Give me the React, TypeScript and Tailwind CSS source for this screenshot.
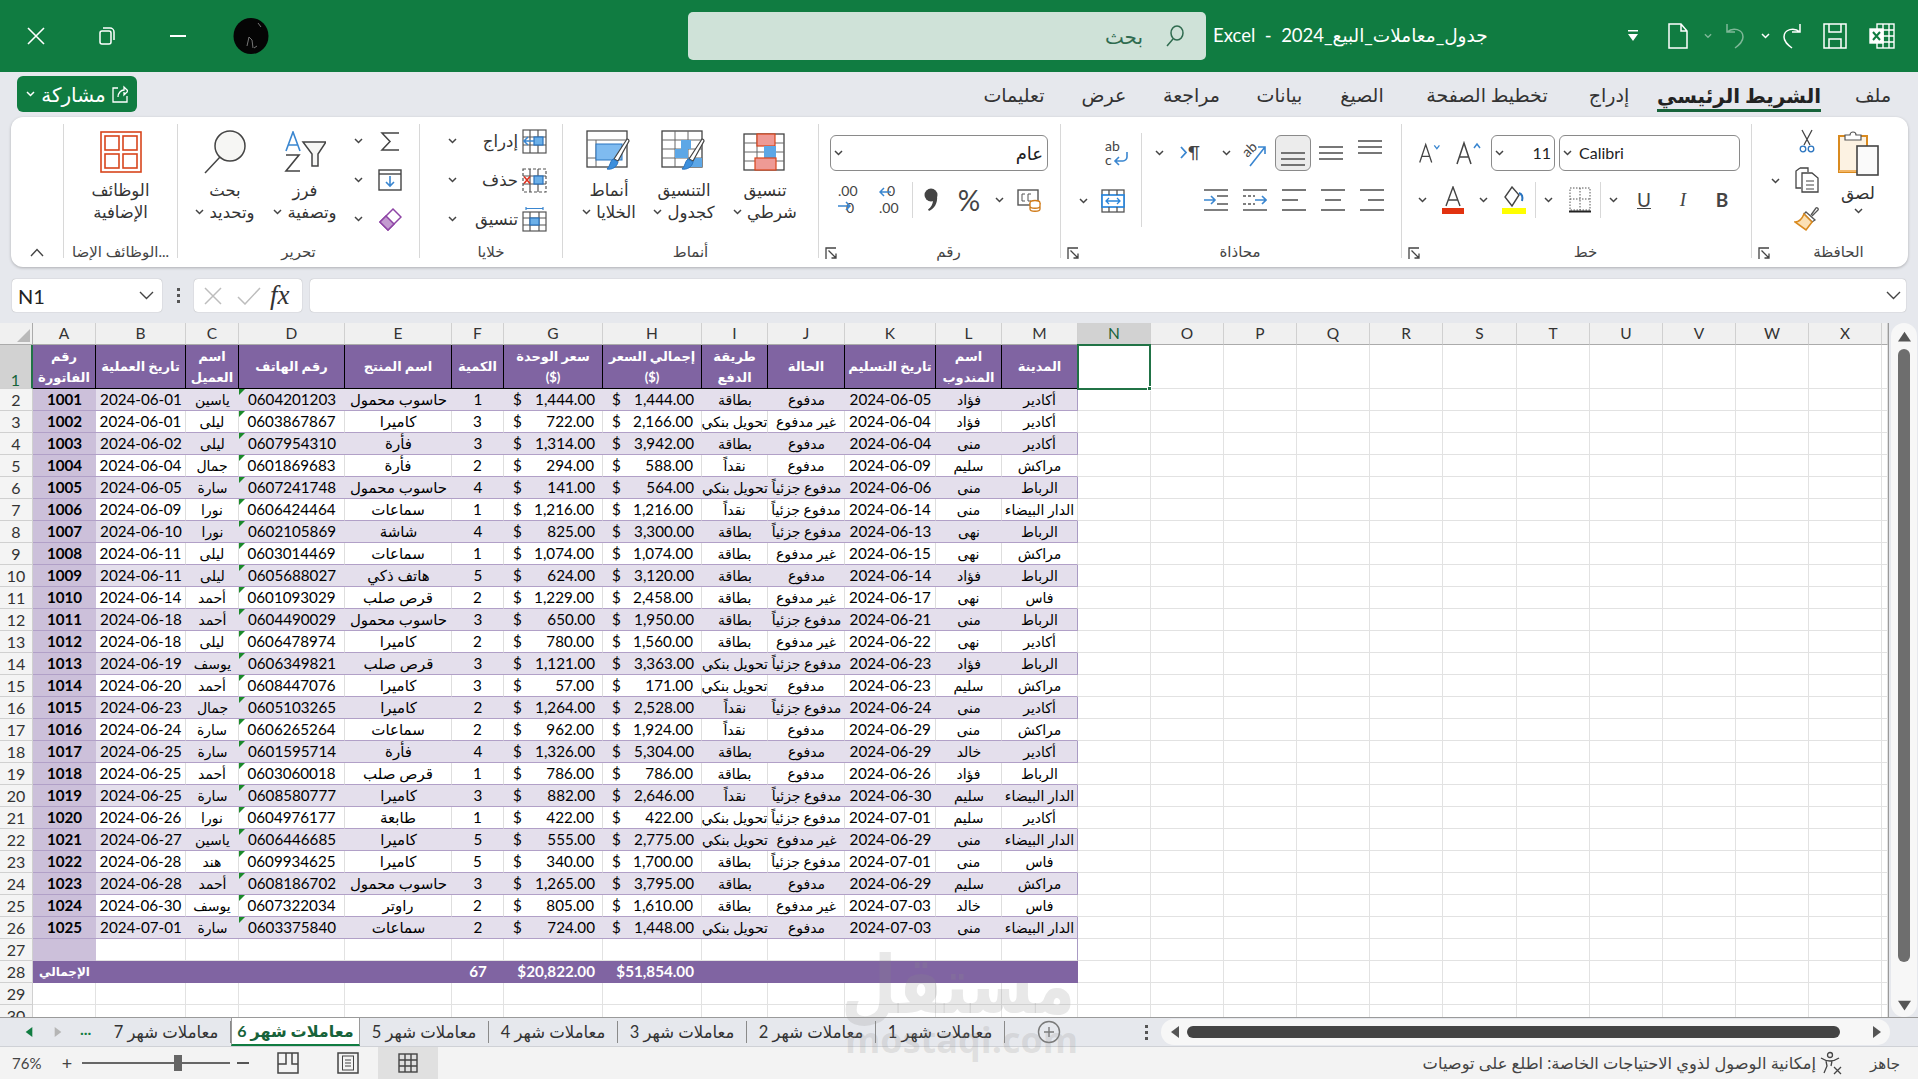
import React from 'react';

const COLS =
  'grid grid-cols-[33px_63px_90px_53px_106px_107px_52px_99px_99px_66px_77px_91px_66px_76px_73px_73px_73px_73px_73px_74px_73px_73px_73px_73px_73px_6px] grid-rows-[22px_44px] auto-rows-[22px]';

const LETTERS = 'A B C D E F G H I J K L M N O P Q R S T U V W X'.split(' ').concat('');

const HEADERS = [
  ['رقم', 'الفاتورة'],
  ['تاريخ العملية'],
  ['اسم', 'العميل'],
  ['رقم الهاتف'],
  ['اسم المنتج'],
  ['الكمية'],
  ['سعر الوحدة', '($)'],
  ['إجمالي السعر', '($)'],
  ['طريقة', 'الدفع'],
  ['الحالة'],
  ['تاريخ التسليم'],
  ['اسم', 'المندوب'],
  ['المدينة'],
];

const ROWS = [
  '1001|2024-06-01|ياسين|0604201203|حاسوب محمول|1|1,444.00|1,444.00|بطاقة|مدفوع|2024-06-05|فؤاد|أكادير',
  '1002|2024-06-01|ليلى|0603867867|كاميرا|3|722.00|2,166.00|تحويل بنكي|غير مدفوع|2024-06-04|فؤاد|أكادير',
  '1003|2024-06-02|ليلى|0607954310|فأرة|3|1,314.00|3,942.00|بطاقة|مدفوع|2024-06-04|منى|أكادير',
  '1004|2024-06-04|جمال|0601869683|فأرة|2|294.00|588.00|نقداً|مدفوع|2024-06-09|سليم|مراكش',
  '1005|2024-06-05|سارة|0607241748|حاسوب محمول|4|141.00|564.00|تحويل بنكي|مدفوع جزئياً|2024-06-06|منى|الرباط',
  '1006|2024-06-09|نورا|0606424464|سماعات|1|1,216.00|1,216.00|نقداً|مدفوع جزئياً|2024-06-14|منى|الدار البيضاء',
  '1007|2024-06-10|نورا|0602105869|شاشة|4|825.00|3,300.00|بطاقة|مدفوع جزئياً|2024-06-13|نهى|الرباط',
  '1008|2024-06-11|ليلى|0603014469|سماعات|1|1,074.00|1,074.00|بطاقة|غير مدفوع|2024-06-15|نهى|مراكش',
  '1009|2024-06-11|ليلى|0605688027|هاتف ذكي|5|624.00|3,120.00|بطاقة|مدفوع|2024-06-14|فؤاد|الرباط',
  '1010|2024-06-14|أحمد|0601093029|قرص صلب|2|1,229.00|2,458.00|بطاقة|غير مدفوع|2024-06-17|نهى|فاس',
  '1011|2024-06-18|أحمد|0604490029|حاسوب محمول|3|650.00|1,950.00|بطاقة|مدفوع جزئياً|2024-06-21|منى|الرباط',
  '1012|2024-06-18|ليلى|0606478974|كاميرا|2|780.00|1,560.00|بطاقة|غير مدفوع|2024-06-22|نهى|أكادير',
  '1013|2024-06-19|يوسف|0606349821|قرص صلب|3|1,121.00|3,363.00|تحويل بنكي|مدفوع جزئياً|2024-06-23|فؤاد|الرباط',
  '1014|2024-06-20|أحمد|0608447076|كاميرا|3|57.00|171.00|تحويل بنكي|مدفوع|2024-06-23|سليم|مراكش',
  '1015|2024-06-23|جمال|0605103265|كاميرا|2|1,264.00|2,528.00|نقداً|مدفوع جزئياً|2024-06-24|منى|أكادير',
  '1016|2024-06-24|سارة|0606265264|سماعات|2|962.00|1,924.00|نقداً|مدفوع|2024-06-29|منى|مراكش',
  '1017|2024-06-25|سارة|0601595714|فأرة|4|1,326.00|5,304.00|بطاقة|مدفوع|2024-06-29|خالد|أكادير',
  '1018|2024-06-25|أحمد|0603060018|قرص صلب|1|786.00|786.00|بطاقة|مدفوع|2024-06-26|فؤاد|الرباط',
  '1019|2024-06-25|سارة|0608580777|كاميرا|3|882.00|2,646.00|نقداً|مدفوع جزئياً|2024-06-30|سليم|الدار البيضاء',
  '1020|2024-06-26|نورا|0604976177|طابعة|1|422.00|422.00|تحويل بنكي|مدفوع جزئياً|2024-07-01|سليم|أكادير',
  '1021|2024-06-27|ياسين|0606446685|كاميرا|5|555.00|2,775.00|تحويل بنكي|غير مدفوع|2024-06-29|منى|الدار البيضاء',
  '1022|2024-06-28|هند|0609934625|كاميرا|5|340.00|1,700.00|بطاقة|مدفوع جزئياً|2024-07-01|منى|فاس',
  '1023|2024-06-28|أحمد|0608186702|حاسوب محمول|3|1,265.00|3,795.00|بطاقة|مدفوع|2024-06-29|سليم|مراكش',
  '1024|2024-06-30|يوسف|0607322034|راوتر|2|805.00|1,610.00|بطاقة|غير مدفوع|2024-07-03|خالد|فاس',
  '1025|2024-07-01|سارة|0603375840|سماعات|2|724.00|1,448.00|تحويل بنكي|مدفوع|2024-07-03|منى|الدار البيضاء',
].map((r) => r.split('|'));

const Chev = ({ c = '#444' }: { c?: string }) => (
  <svg width="9" height="6" viewBox="0 0 9 6" fill="none" stroke={c} strokeWidth="1.5">
    <path d="M1 1l3.5 3.5L8 1" />
  </svg>
);

const BigChev = () => (
  <svg width="15" height="9" viewBox="0 0 15 9" fill="none" stroke="#444" strokeWidth="1.4">
    <path d="M1 1l6.500 6.500L14 1" />
  </svg>
);

const Launcher = () => (
  <svg width="12" height="13" viewBox="0 0 12 13" fill="none" stroke="#444" strokeWidth="1.3">
    <path d="M1 12V1h10" />
    <path d="M3.5 3.5l7 7M11 6.5V11H6.5" />
  </svg>
);

const Tri = ({ dir, c, size = 10 }: { dir: 'l' | 'r' | 'u' | 'd'; c: string; size?: number }) => {
  const d = { l: 'M9 0v12L1 6z', r: 'M1 0v12l8-6z', u: 'M0 10h12L6 1z', d: 'M0 1h12L6 10z' }[dir];
  return (
    <svg width={size} height={size} viewBox={dir === 'l' || dir === 'r' ? '0 0 10 12' : '0 0 12 11'}>
      <path d={d} fill={c} />
    </svg>
  );
};

const AddinsIcon = () => (
  <svg width="42" height="42" viewBox="0 0 42 42" fill="#fff" stroke="#d8451c" strokeWidth="1.6">
    <rect x="1" y="1" width="40" height="40" fill="#fff" />
    <rect x="5" y="5" width="14" height="14" />
    <rect x="23" y="5" width="14" height="14" />
    <rect x="5" y="23" width="14" height="14" />
    <rect x="23" y="23" width="14" height="14" />
  </svg>
);

const FindIcon = () => (
  <svg width="46" height="46" viewBox="0 0 46 46" fill="none" stroke="#444" strokeWidth="1.5">
    <circle cx="28" cy="17" r="15" fill="#f6f6f4" />
    <path d="M18 28L3 44" />
  </svg>
);

const SortIcon = () => (
  <svg width="42" height="42" viewBox="0 0 42 42" fill="none">
    <path d="M2 20L9 1l7 19M4.500 14h9" stroke="#3a86d0" strokeWidth="1.6" />
    <path d="M2 24h13L2 40h14" stroke="#444" strokeWidth="1.6" />
    <path d="M19 11h23l-8 12v12h-6V23z" stroke="#444" strokeWidth="1.5" fill="#f6f6f4" />
  </svg>
);

const SigmaIcon = () => (
  <svg width="20" height="21" viewBox="0 0 20 21" fill="none" stroke="#444" strokeWidth="1.5">
    <path d="M19 2H2l8 8.500L2 19h17" />
  </svg>
);

const FillIcon = () => (
  <svg width="24" height="22" viewBox="0 0 24 22" fill="#fff" stroke="#444" strokeWidth="1.4">
    <rect x="1" y="1" width="22" height="20" />
    <path d="M1 5h22" />
    <path d="M12 7v10M8 13l4 4 4-4" stroke="#3a86d0" fill="none" strokeWidth="1.6" />
  </svg>
);

const EraserIcon = () => (
  <svg width="24" height="24" viewBox="0 0 24 24" stroke="#8e44a5" strokeWidth="1.5">
    <path d="M15 2l8 8-13 13-8-8z" fill="#fff" />
    <path d="M8 9l8 8-6 6-8-8z" fill="#c39bd0" />
  </svg>
);

const CellOp = ({ kind }: { kind: 'ins' | 'del' | 'fmt' }) => (
  <svg width="25" height="25" viewBox="0 0 25 25" fill="none" stroke="#555" strokeWidth="1.2">
    {kind === 'fmt' ? (
      <>
        <path d="M4 1.500h17M4 0v3M21 0v3" stroke="#3a86d0" />
        <rect x="1" y="5" width="23" height="19" />
        <path d="M8 5v19M17 5v19M1 11h23M1 18h23" />
        <rect x="8" y="11" width="9" height="7" fill="#6cb0e8" stroke="#2a74bf" />
      </>
    ) : (
      <>
        <rect x="1" y="1" width="23" height="23" strokeDasharray={kind === 'del' ? '3 2' : undefined} />
        <path d="M8 1v23M16 1v23M1 8h23M1 16h23" />
        <rect x="12" y="8" width="9" height="8" fill="#6cb0e8" stroke="#2a74bf" />
        {kind === 'ins' ? (
          <path d="M12 12H2M6 8l-4 4 4 4" stroke="#3a86d0" strokeWidth="1.6" />
        ) : (
          <path d="M2 8.500l6 7M8 8.500l-6 7" stroke="#e0301e" strokeWidth="1.6" />
        )}
      </>
    )}
  </svg>
);

const Brush = () => (
  <>
    <path d="M41 9c1 0 2 1 2 2L32 31l-4-2z" fill="#fff" stroke="#444" strokeWidth="1.2" />
    <path d="M27 29l5 3c-1 5-6 8-11 7 3-2 3-8 6-10z" fill="#3d8fdc" stroke="#2a74bf" />
  </>
);

const GridBase = () => (
  <>
    <rect x="1" y="1" width="40" height="36" fill="#fff" stroke="#444" strokeWidth="1.3" />
    <path d="M14 1v36M27 1v36M1 10h40M1 19h40M1 28h40" stroke="#666" strokeWidth="1" fill="none" />
  </>
);

const CondIcon = () => (
  <svg width="44" height="38" viewBox="0 0 44 38">
    <GridBase />
    <rect x="14" y="1" width="18" height="12" fill="#ee9a95" stroke="#d8451c" strokeWidth="1.2" />
    <rect x="21" y="13" width="12" height="12" fill="#5da7e6" />
    <rect x="12" y="25" width="21" height="12" fill="#ee9a95" stroke="#d8451c" strokeWidth="1.2" />
  </svg>
);

const TableIcon = () => (
  <svg width="46" height="44" viewBox="0 0 46 44">
    <GridBase />
    <rect x="14" y="19" width="13" height="9" fill="#5da7e6" />
    <rect x="20" y="10" width="10" height="9" fill="#5da7e6" />
    <rect x="27" y="28" width="14" height="9" fill="#5da7e6" />
    <Brush />
  </svg>
);

const StylesIcon = () => (
  <svg width="46" height="44" viewBox="0 0 46 44">
    <rect x="1" y="1" width="40" height="36" fill="#fff" stroke="#444" strokeWidth="1.3" />
    <path d="M1 10h40M10 10v27M1 28h24" stroke="#666" fill="none" />
    <rect x="10" y="14" width="26" height="16" fill="#7fbbf0" stroke="#2a74bf" />
    <Brush />
  </svg>
);

const PasteIcon = () => (
  <svg width="41" height="46" viewBox="0 0 41 46" fill="none">
    <rect x="1" y="6" width="28" height="36" fill="#fcf2e2" stroke="#d98a1f" strokeWidth="2" />
    <path d="M1 40h28v2H1z" fill="#f2b565" />
    <path d="M7 10V5h5a3 3 0 0 1 6 0h5v5z" fill="#fff" stroke="#555" strokeWidth="1.2" />
    <rect x="19" y="16" width="21" height="29" fill="#fafafa" stroke="#444" strokeWidth="1.6" />
  </svg>
);

const CutIcon = () => (
  <svg width="16" height="24" viewBox="0 0 16 24" fill="none" strokeWidth="1.3">
    <path d="M3 1l8 15M13 1L5 16" stroke="#444" />
    <circle cx="4" cy="20" r="2.800" stroke="#2a74bf" />
    <circle cx="12" cy="20" r="2.800" stroke="#2a74bf" />
  </svg>
);

const CopyIcon = () => (
  <svg width="25" height="26" viewBox="0 0 25 26" fill="#fff" stroke="#444" strokeWidth="1.3">
    <path d="M5 1h8v4M5 1L1 4v17h5" />
    <path d="M7 6h10l6 5v14H7z" />
    <path d="M11 14h8M11 18h8M11 22h8" strokeWidth="1" />
  </svg>
);

const PainterIcon = () => (
  <svg width="26" height="26" viewBox="0 0 26 26" fill="none" stroke="#555" strokeWidth="1.3">
    <path d="M17 9l5-7c1-1 3 1 2 2l-6 6" />
    <path d="M12 6l9 8-3 2-8-8z" />
    <path d="M10 8l8 8-6 8-11-8c4 0 7-3 9-8z" fill="#fbe0b4" stroke="#d98a1f" strokeWidth="1.6" />
  </svg>
);

const BigA = ({ up }: { up: boolean }) => (
  <svg width={up ? 28 : 24} height="24" viewBox="0 0 28 24" fill="none" strokeWidth="1.5">
    <path d="M2 23L9 2l7 21M5 16h8" stroke="#444" />
    <path d={up ? 'M19 7l3-4 3 4' : 'M19 3l3 4 3-4'} stroke="#3a86d0" />
  </svg>
);

const FontColor = () => (
  <svg width="22" height="28" viewBox="0 0 22 28" fill="none">
    <path d="M4 20L11 1l7 19M6.500 14h9" stroke="#444" strokeWidth="1.4" />
    <rect x="0" y="22" width="22" height="6" fill="#e2320f" />
  </svg>
);

const FillColor = () => (
  <svg width="24" height="28" viewBox="0 0 24 28" fill="none">
    <path d="M10 1l7 8-7 11-7-9z" stroke="#444" strokeWidth="1.4" />
    <path d="M17 7c3 1 4 4 3 8" stroke="#2a74bf" strokeWidth="2" />
    <rect x="0" y="22" width="24" height="6" fill="#ffff00" />
  </svg>
);

const Borders = () => (
  <svg width="22" height="26" viewBox="0 0 22 26" fill="none" stroke="#555" strokeWidth="1" strokeDasharray="1.500 1.500">
    <rect x="1" y="1" width="20" height="22" />
    <path d="M11 1v22M1 12h20" />
    <path d="M0 24.500h22" stroke="#222" strokeWidth="2" strokeDasharray="none" />
  </svg>
);

const Lines = ({ ys, w = [24, 24, 24], x = [0, 0, 0] }: { ys: number[]; w?: number[]; x?: number[] }) => (
  <svg width="24" height="26" viewBox="0 0 24 26" stroke="#555" strokeWidth="1.6">
    {ys.map((y, i) => (
      <path key={i} d={`M${x[i]} ${y}h${w[i]}`} />
    ))}
  </svg>
);

const IndentIcon = ({ flip }: { flip?: boolean }) => (
  <svg width="24" height="26" viewBox="0 0 24 26" fill="none" stroke="#555" strokeWidth="1.6">
    <path d="M0 3h24M0 23h24" />
    {flip ? <path d="M0 9h12M0 17h12" strokeDasharray="3 2" /> : <path d="M13 9h11M13 17h11" />}
    <path d={flip ? 'M12 13h11M19 9l4 4-4 4' : 'M0 13h10M7 9l4 4-4 4'} stroke="#3a86d0" />
  </svg>
);

const Orient = () => (
  <svg width="26" height="28" viewBox="0 0 26 28" fill="none">
    <text x="2" y="16" fontSize="14" fill="#444" transform="rotate(-45 8 12)">ab</text>
    <path d="M9 27L24 8M17 8h7v7" stroke="#3a86d0" strokeWidth="1.6" />
  </svg>
);

const WrapIcon = () => (
  <svg width="24" height="28" viewBox="0 0 24 28" fill="none">
    <text x="0" y="12" fontSize="14" fill="#444">ab</text>
    <text x="0" y="26" fontSize="14" fill="#444">c</text>
    <path d="M22 13v5c0 2-2 4-4 4h-7M14 18l-4 4 4 4" stroke="#3a86d0" strokeWidth="1.6" />
  </svg>
);

const MergeIcon = () => (
  <svg width="24" height="24" viewBox="0 0 24 24" fill="#fff" stroke="#555" strokeWidth="1.3">
    <rect x="1" y="1" width="22" height="22" />
    <rect x="1" y="6" width="22" height="12" stroke="#2a86dc" strokeWidth="1.700" />
    <path d="M8 1v5M16 1v5M8 18v5M16 18v5" />
    <path d="M5 12h14M8 9l-3 3 3 3M16 9l3 3-3 3" fill="none" stroke="#2a86dc" strokeWidth="1.300" />
  </svg>
);

const RtlIcon = () => (
  <svg width="22" height="20" viewBox="0 0 22 20" fill="none">
    <path d="M2 4l5 5.500L2 15" stroke="#3a86d0" strokeWidth="1.800" />
    <text x="9" y="16" fontSize="17" fill="#444">¶</text>
  </svg>
);

const CommaIcon = () => (
  <svg width="14" height="24" viewBox="0 0 14 24" fill="#444">
    <circle cx="7" cy="7" r="6.500" />
    <path d="M13 8c1 7-3 13-8 15l-1-1.500c3-2 5-6 5-9z" />
  </svg>
);

const DecIcon = ({ more }: { more: boolean }) => (
  <svg width="24" height="30" viewBox="0 0 24 30" fill="none">
    <text x={more ? 0 : 8} y="11" fontSize="14" fontFamily="Lato" fill="#444">{more ? '.00' : '0'}</text>
    <text x={more ? 8 : 0} y="28" fontSize="14" fontFamily="Lato" fill="#444">{more ? '0' : '.00'}</text>
    {more ? <path d="M0 21h12M8 17l4 4-4 4" stroke="#3a86d0" strokeWidth="1.500" /> : <path d="M12 7H1M5 3L1 7l4 4" stroke="#3a86d0" strokeWidth="1.500" />}
  </svg>
);

const AccIcon = () => (
  <svg width="24" height="24" viewBox="0 0 24 24" fill="none">
    <rect x="1" y="2" width="20" height="15" stroke="#555" strokeWidth="1.400" />
    <path d="M5 6h3M5 6v7h3M11 6h3M11 6v7h3" stroke="#555" />
    <ellipse cx="18" cy="15" rx="5" ry="2.500" fill="#fff" stroke="#d07a18" strokeWidth="1.300" />
    <path d="M13 15v6c0 3 10 3 10 0v-6M13 18c0 3 10 3 10 0" fill="#fff" stroke="#d07a18" strokeWidth="1.300" />
  </svg>
);

const SearchGlass = ({ c, size = 22 }: { c: string; size?: number }) => (
  <svg width={size} height={size} viewBox="0 0 22 22" fill="none" stroke={c} strokeWidth="1.500">
    <ellipse cx="14" cy="8" rx="6" ry="7" />
    <path d="M10 14l-6 7" />
  </svg>
);

const Group = ({ className, label, launcher, last, children }: { className: string; label?: React.ReactNode; launcher?: boolean; last?: boolean; children: React.ReactNode }) => (
  <div className={`${className} flex flex-col ${last ? '' : 'border-r border-[#d8d8d8]'}`}>
    <div className="h-[120px] flex">{children}</div>
    <div className="h-[14px] flex items-center text-[15px] text-[#444]">
      {launcher && <span className="ml-[6px] w-[12px] mt-[4px] flex"><Launcher /></span>}
      <span className="flex-1 flex justify-center whitespace-nowrap">{label}</span>
    </div>
  </div>
);

const LargeBtn = ({ className, icon, l1, l2, noChev }: { className: string; icon: React.ReactNode; l1: string; l2: string; noChev?: boolean }) => (
  <div className={`${className} flex flex-col items-center pt-[6px] text-[16.5px] leading-[22px] text-[#333] whitespace-nowrap`}>
    <div className="h-[44px] flex items-center justify-center">{icon}</div>
    <div className="mt-[5px]">{l1}</div>
    <div className="flex items-center gap-[5px]">
      {!noChev && <Chev />}
      <span>{l2}</span>
    </div>
  </div>
);

const Slot = ({ className, children }: { className: string; children?: React.ReactNode }) => (
  <div className={`${className} h-[36px] flex items-center justify-center shrink-0`}>{children}</div>
);

const Sep = () => <div className="w-px h-[36px] bg-[#d8d8d8] shrink-0" />;

const CellsRow = ({ kind, text }: { kind: 'ins' | 'del' | 'fmt'; text: string }) => (
  <div className="h-[34px] flex items-center justify-between pl-[28px] pr-[15px]">
    <Chev />
    <div className="flex items-center gap-[4px] text-[16.5px] text-[#333]">
      <span>{text}</span>
      <CellOp kind={kind} />
    </div>
  </div>
);

const EditRow = ({ children }: { children: React.ReactNode }) => (
  <div className="h-[34px] flex items-center pl-[16px]">
    <Chev />
    <div className="w-[25px] ml-[14px] flex justify-center">{children}</div>
  </div>
);

const Ribbon = () => (
  <div className="h-[150px] mr-[10px] ml-[11px] pt-[7px] pb-[9px] flex bg-white rounded-[12px] shadow-[0_1px_3px_rgba(0,0,0,0.25)]">
    <Group
      className="w-[53px]"
      label={
        <svg className="mt-[3px]" width="14" height="9" viewBox="0 0 14 9" fill="none" stroke="#444" strokeWidth="1.400">
          <path d="M1 8l6-6.500L13 8" />
        </svg>
      }
    >
      <div />
    </Group>
    <Group className="w-[114px]" label="الوظائف الإضا...">
      <LargeBtn className="w-full" icon={<AddinsIcon />} l1="الوظائف" l2="الإضافية" noChev />
    </Group>
    <Group className="w-[242px]" label="تحرير">
      <LargeBtn className="w-[94px]" icon={<FindIcon />} l1="بحث" l2="وتحديد" />
      <LargeBtn className="w-[66px]" icon={<SortIcon />} l1="فرز" l2="وتصفية" />
      <div className="flex-1 flex flex-col gap-[5px]">
        <EditRow><SigmaIcon /></EditRow>
        <EditRow><FillIcon /></EditRow>
        <EditRow><EraserIcon /></EditRow>
      </div>
    </Group>
    <Group className="w-[143px]" label="خلايا">
      <div className="w-full flex flex-col gap-[5px]">
        <CellsRow kind="ins" text="إدراج" />
        <CellsRow kind="del" text="حذف" />
        <CellsRow kind="fmt" text="تنسيق" />
      </div>
    </Group>
    <Group className="w-[256px]" label="أنماط">
      <LargeBtn className="w-[92px]" icon={<StylesIcon />} l1="أنماط" l2="الخلايا" />
      <LargeBtn className="w-[58px]" icon={<TableIcon />} l1="التنسيق" l2="كجدول" />
      <LargeBtn className="w-[104px]" icon={<CondIcon />} l1="تنسيق" l2="شرطي" />
    </Group>
    <Group className="w-[242px]" label="رقم" launcher>
      <div className="w-full pl-[11px] pt-[11px] flex flex-col gap-[11px]">
        <div className="w-[218px] h-[36px] flex items-center justify-between pl-[3px] pr-[4px] rounded-[6px] border border-[#8a8a8a] text-[18px] text-[#222]">
          <Chev />
          <span>عام</span>
        </div>
        <div className="flex">
          <Slot className="w-[40px]"><DecIcon more /></Slot>
          <Slot className="w-[42px]"><DecIcon more={false} /></Slot>
          <Sep />
          <Slot className="w-[36px]"><CommaIcon /></Slot>
          <Slot className="w-[40px]"><span className="text-[28px] text-[#444]">%</span></Slot>
          <Slot className="w-[20px]"><Chev /></Slot>
          <Slot className="w-[39px]"><AccIcon /></Slot>
        </div>
      </div>
    </Group>
    <Group className="w-[341px]" label="محاذاة" launcher>
      <div className="w-[81px] pt-[2px] flex flex-col gap-[18px] h-[94px] shrink-0 border-r border-[#d8d8d8] mt-[9px]">
        <Slot className="w-full ml-[16px]"><WrapIcon /></Slot>
        <div className="flex items-center pl-[18px] gap-[13px]"><Chev /><MergeIcon /></div>
      </div>
      <div className="flex-1 pt-[11px] flex flex-col gap-[11px]">
        <div className="flex">
          <Slot className="w-[34px]"><Chev /></Slot>
          <Slot className="w-[28px]"><RtlIcon /></Slot>
          <Slot className="w-[10px]" />
          <Slot className="w-[25px]"><Chev /></Slot>
          <Slot className="w-[30px]"><Orient /></Slot>
          <Slot className="w-[6px]" />
          <Slot className="w-[36px] bg-[#ececec] border border-[#8a8a8a] rounded-[6px]"><Lines ys={[13, 19, 25]} /></Slot>
          <Slot className="w-[40px]"><Lines ys={[7, 13, 19]} /></Slot>
          <Slot className="w-[38px]"><Lines ys={[1, 7, 13]} /></Slot>
        </div>
        <div className="flex pl-[54px]">
          <Slot className="w-[39px]"><IndentIcon /></Slot>
          <Slot className="w-[39px]"><IndentIcon flip /></Slot>
          <Slot className="w-[39px]"><Lines ys={[3, 13, 23]} w={[24, 16, 24]} /></Slot>
          <Slot className="w-[39px]"><Lines ys={[3, 13, 23]} w={[24, 16, 24]} x={[0, 4, 0]} /></Slot>
          <Slot className="w-[39px]"><Lines ys={[3, 13, 23]} w={[24, 16, 24]} x={[0, 8, 0]} /></Slot>
        </div>
      </div>
    </Group>
    <Group className="w-[350px]" label="خط" launcher>
      <div className="w-full pl-[9px] pt-[11px] flex flex-col gap-[11px]">
        <div className="flex">
          <Slot className="w-[38px]"><BigA up={false} /></Slot>
          <Slot className="w-[40px]"><BigA up /></Slot>
          <div className="w-[64px] h-[36px] ml-[2px] flex items-center justify-between px-[3px] rounded-[6px] border border-[#8a8a8a] text-[16px] text-[#222]">
            <Chev />
            <span>11</span>
          </div>
          <div className="w-[181px] h-[36px] ml-[4px] flex items-center gap-[7px] px-[3px] rounded-[6px] border border-[#8a8a8a] text-[16px] text-[#222]">
            <Chev />
            <span>Calibri</span>
          </div>
        </div>
        <div className="flex">
          <Slot className="w-[22px]"><Chev /></Slot>
          <Slot className="w-[40px]"><FontColor /></Slot>
          <Slot className="w-[20px]"><Chev /></Slot>
          <Slot className="w-[42px]"><FillColor /></Slot>
          <Sep />
          <Slot className="w-[24px]"><Chev /></Slot>
          <Slot className="w-[40px]"><Borders /></Slot>
          <Sep />
          <Slot className="w-[24px]"><Chev /></Slot>
          <Slot className="w-[38px]"><span className="text-[19px] underline text-[#444]">U</span></Slot>
          <Slot className="w-[40px]"><span className="text-[19px] italic text-[#444] [font-family:'Liberation_Serif',serif]">I</span></Slot>
          <Slot className="w-[38px]"><span className="text-[19px] font-bold text-[#444]">B</span></Slot>
        </div>
      </div>
    </Group>
    <Group className="w-[155px]" label="الحافظة" launcher last>
      <div className="w-[46px] flex items-center justify-center pb-[6px]"><Chev /></div>
      <div className="w-[18px] flex flex-col items-center gap-[5px]">
        <div className="h-[34px] flex items-center"><CutIcon /></div>
        <div className="h-[34px] flex items-center"><CopyIcon /></div>
        <div className="h-[34px] flex items-center"><PainterIcon /></div>
      </div>
      <div className="w-[84px] flex flex-col items-center pt-[6px] text-[17px] leading-[22px] text-[#333]">
        <PasteIcon />
        <div className="mt-[6px] h-[26px]">لصق</div>
        <Chev />
      </div>
    </Group>
  </div>
);

const TitleBar = () => (
  <div className="h-[72px] flex bg-[#107c41] text-white">
    <div className="w-[71px] flex items-center justify-center">
      <svg width="18" height="18" viewBox="0 0 18 18" stroke="#fff" strokeWidth="1.600"><path d="M1 1l16 16M17 1L1 17" /></svg>
    </div>
    <div className="w-[71px] flex items-center justify-center">
      <svg width="16" height="18" viewBox="0 0 16 18" fill="none" stroke="#fff" strokeWidth="1.500">
        <rect x="1" y="4" width="11" height="13" rx="2" />
        <path d="M4 1h7a4 4 0 0 1 4 4v8" />
      </svg>
    </div>
    <div className="w-[72px] flex items-center justify-center">
      <div className="w-[16px] h-[2px] bg-white" />
    </div>
    <svg className="ml-[19px] mt-[18px]" width="36" height="36" viewBox="0 0 36 36" fill="none">
      <ellipse cx="18" cy="18" rx="17.500" ry="18" fill="#050505" />
      <path d="M14 28l2-9 3 3 1 8M25 5l3 4M21 30l3-2" stroke="#777" strokeWidth="1" />
    </svg>
    <div className="ml-[419px] mt-[12px] w-[518px] h-[48px] flex items-center justify-end gap-[20px] pr-[21px] rounded-[5px] bg-[#cfe2d8] text-[#2f6b4f] text-[20px]">
      <span>بحث</span>
      <SearchGlass c="#2f6b4f" />
    </div>
    <div dir="rtl" className="ml-[7px] w-[275px] flex items-center justify-end text-[18.5px] whitespace-pre">
      جدول_معاملات_البيع_2024  -  Excel
    </div>
    <div className="flex-1 flex items-center justify-end pr-[12px]">
      <div className="w-[38px] flex justify-center">
        <svg width="12" height="14" viewBox="0 0 12 14" fill="#fff"><path d="M1 1h10v1.500H1zM1 5h10l-5 7z" /></svg>
      </div>
      <div className="w-[52px] flex justify-center">
        <svg width="20" height="26" viewBox="0 0 20 26" fill="none" stroke="#fff" strokeWidth="1.500"><path d="M1 1h12l6 7v17H1zM13 1v7h6" /></svg>
      </div>
      <div className="w-[8px] flex justify-center"><Chev c="#7fb898" /></div>
      <div className="w-[46px] flex justify-center">
        <svg width="22" height="26" viewBox="0 0 22 26" fill="none" stroke="#7fb898" strokeWidth="1.500"><path d="M3 1v8h8M3 9c6-5 16-3 16 5 0 5-4 8-8 11" /></svg>
      </div>
      <div className="w-[14px] flex justify-center"><Chev c="#fff" /></div>
      <div className="w-[40px] flex justify-center">
        <svg width="22" height="26" viewBox="0 0 22 26" fill="none" stroke="#fff" strokeWidth="1.500"><path d="M19 1v8h-8M19 9C13 4 3 6 3 14c0 5 4 8 8 11" /></svg>
      </div>
      <div className="w-[46px] flex justify-center">
        <svg width="24" height="26" viewBox="0 0 24 26" fill="none" stroke="#fff" strokeWidth="1.500"><path d="M1 1h22v24H1zM6 1v8h12V1M6 25v-9h12v9" /></svg>
      </div>
      <div className="w-[48px] flex justify-center">
        <svg width="26" height="26" viewBox="0 0 26 26" fill="none" stroke="#fff" strokeWidth="1.400">
          <rect x="8" y="1" width="17" height="24" />
          <path d="M14 1v24M20 1v24M8 7h17M8 13h17M8 19h17" />
          <rect x="1" y="6" width="13" height="14" fill="#fff" />
          <path d="M4 9l7 8M11 9l-7 8" stroke="#107c41" strokeWidth="2" />
        </svg>
      </div>
    </div>
  </div>
);

const TABS: [string, string, boolean?][] = [
  ['تعليمات', 'w-[74px]'],
  ['عرض', 'w-[106px]'],
  ['مراجعة', 'w-[69px]'],
  ['بيانات', 'w-[107px]'],
  ['الصيغ', 'w-[58px]'],
  ['تخطيط الصفحة', 'w-[192px]'],
  ['إدراج', 'w-[52px]'],
  ['الشريط الرئيسي', 'w-[208px]', true],
  ['ملف', 'w-[60px]'],
];

const TabRow = () => (
  <div className="h-[45px] flex items-start pl-[17px] pr-[15px] pt-[4px]">
    <div className="w-[120px] h-[36px] flex items-center justify-center gap-[6px] rounded-[6px] bg-[#107c41] text-white text-[20px]">
      <Chev c="#fff" />
      <span>مشاركة</span>
      <svg width="16" height="18" viewBox="0 0 16 18" fill="none" stroke="#fff" strokeWidth="1.300">
        <path d="M6 3H1v14h14v-6M6 12c0-4 3-7 6-7V2l4 4-4 4V7" />
      </svg>
    </div>
    <div className="flex-1 flex justify-end h-[36px] text-[#333] text-[19px]">
      {TABS.map(([t, w, active]) => (
        <div key={t} className={`${w} flex justify-center whitespace-nowrap`}>
          <span className={`h-[36px] leading-[38px] ${active ? 'font-bold text-[20px] text-[#222] border-b-[3px] border-[#17633a]' : ''}`}>{t}</span>
        </div>
      ))}
    </div>
  </div>
);

const FormulaBar = () => (
  <div className="h-[33px] mt-[12px] flex pl-[12px] pr-[12px]">
    <div className="w-[150px] flex items-center justify-between pl-[6px] pr-[8px] rounded-[4px] bg-white text-[20px] text-[#222] shadow-[0_0_1px_rgba(0,0,0,0.4)]">
      <span>N1</span>
      <BigChev />
    </div>
    <div className="w-[32px] flex flex-col items-center justify-center gap-[3px]">
      <div className="w-[3px] h-[3px] bg-[#555]" />
      <div className="w-[3px] h-[3px] bg-[#555]" />
      <div className="w-[3px] h-[3px] bg-[#555]" />
    </div>
    <div className="w-[108px] flex items-center rounded-[4px] bg-white shadow-[0_0_1px_rgba(0,0,0,0.4)]">
      <svg className="ml-[10px]" width="18" height="18" viewBox="0 0 18 18" stroke="#bdbdbd" strokeWidth="1.500"><path d="M1 1l16 16M17 1L1 17" /></svg>
      <svg className="ml-[15px]" width="24" height="18" viewBox="0 0 24 18" fill="none" stroke="#bdbdbd" strokeWidth="1.500"><path d="M1 10l7 7L23 1" /></svg>
      <span className="ml-[9px] text-[27px] leading-none italic text-[#333] [font-family:'Liberation_Serif',serif]">fx</span>
    </div>
    <div className="ml-[8px] flex-1 flex items-center justify-end pr-[5px] rounded-[4px] bg-white shadow-[0_0_1px_rgba(0,0,0,0.4)]">
      <BigChev />
    </div>
  </div>
);

const Blanks = ({ n = 12 }: { n?: number }) => (
  <>
    {Array.from({ length: n }).map((_, i) => (
      <div key={i} className="border-r border-b border-[#e2e2e2]" />
    ))}
  </>
);

const RowHead = ({ n }: { n: number }) => (
  <div className="flex items-center justify-center bg-[#f4f4f4] border-r border-b border-[#d0d0d0] text-[16px] leading-none text-[#333]">{n}</div>
);

const Sheet = () => (
  <div className="w-[1889px] h-[694px] overflow-hidden bg-white border-r border-[#9a9a9a]">
    <div className={COLS}>
      <div className="flex items-end justify-end p-[2px] bg-[#f0f0f0] border-r border-b border-[#ababab]">
        <div className="w-0 h-0 border-l-[13px] border-t-[13px] border-l-transparent border-t-transparent border-r-0 border-b-[13px] border-b-[#b9b9b9]" />
      </div>
      {LETTERS.map((l) => (
        <div key={l} className={`flex items-center justify-center pt-px border-r border-b border-b-[#ababab] border-r-[#d0d0d0] text-[15.5px] leading-none ${l === 'N' ? 'bg-[#d2d2d2] text-[#17633a]' : 'bg-[#f0f0f0] text-[#333]'}`}>
          {l}
        </div>
      ))}

      <div className="flex items-end justify-center pb-0 bg-[#d2d2d2] border-r-2 border-r-[#217346] border-b border-[#d0d0d0] text-[16px] text-[#17633a] leading-none">1</div>
      {HEADERS.map((h, i) => (
        <div key={i} className="flex flex-col items-center justify-center bg-[#8064a2] border-r border-b border-black text-white font-bold text-[13px] leading-[21px] whitespace-nowrap">
          {h.map((t) => <span key={t}>{t}</span>)}
        </div>
      ))}
      <div className="relative border-r border-b border-[#e2e2e2]">
        <div className="absolute -top-px -left-px -right-px -bottom-[2px] border-2 border-[#217346] z-10">
          <div className="absolute -right-[3px] -bottom-[3px] w-[5px] h-[5px] bg-[#217346] border border-white" />
        </div>
      </div>
      <Blanks n={11} />

      {ROWS.map((r, idx) => {
        const band = idx % 2 === 0;
        const bg = band ? 'bg-[#e4dfec]' : 'bg-white';
        const line = 'border-b border-b-[#b1a0c7] ' + (band ? '' : 'border-r border-r-[#dedede]');
        const base = `flex items-center justify-center whitespace-nowrap overflow-hidden leading-none text-black ${bg} ${line}`;
        return (
          <React.Fragment key={r[0]}>
            <RowHead n={idx + 2} />
            <div className="flex items-center justify-center bg-[#ccc0da] border-b border-b-[#b1a0c7] text-[15.2px] leading-none font-bold text-black">{r[0]}</div>
            <div className={`${base} text-[15.2px]`}>{r[1]}</div>
            <div className={`${base} text-[14px]`}>{r[2]}</div>
            <div className={`${base} relative text-[15.2px]`}>
              <div className="absolute top-0 left-0 w-0 h-0 border-t-[6px] border-r-[6px] border-t-[#1a8a2a] border-r-transparent" />
              {r[3]}
            </div>
            <div className={`${base} text-[15px]`}>{r[4]}</div>
            <div className={`${base} text-[15.2px]`}>{r[5]}</div>
            <div className={`${base} justify-between! pl-[9px] pr-[8px] text-[15.2px]`}><span>$</span><span>{r[6]}</span></div>
            <div className={`${base} justify-between! pl-[9px] pr-[8px] text-[15.2px]`}><span>$</span><span>{r[7]}</span></div>
            <div className={`${base} text-[14px]`}>{r[8]}</div>
            <div className={`${base} text-[14px]`}>{r[9]}</div>
            <div className={`${base} text-[15.2px]`}>{r[10]}</div>
            <div className={`${base} text-[14px]`}>{r[11]}</div>
            <div className={`${base} text-[14px] border-r border-r-[#a99bc4]`}>{r[12]}</div>
            <Blanks />
          </React.Fragment>
        );
      })}

      <RowHead n={27} />
      <div className="bg-[#ccc0da]" />
      {Array.from({ length: 12 }).map((_, i) => (
        <div key={i} className={`border-b border-r border-[#e2e2e2] ${i === 11 ? 'border-r-[#a99bc4]' : ''}`} />
      ))}
      <Blanks />

      <RowHead n={28} />
      <div className="col-span-13 flex items-center bg-[#8064a2] text-white font-bold text-[15.2px] leading-none whitespace-nowrap">
        <span className="w-[63px] text-center text-[12px]">الإجمالي</span>
        <span className="ml-[356px] w-[52px] text-center">67</span>
        <span className="w-[99px] pr-[8px] text-right">$20,822.00</span>
        <span className="w-[99px] pr-[8px] text-right">$51,854.00</span>
      </div>
      <Blanks />

      {[29, 30].map((n) => (
        <React.Fragment key={n}>
          <RowHead n={n} />
          <Blanks n={25} />
        </React.Fragment>
      ))}
    </div>
  </div>
);

const VScroll = () => (
  <div className="w-[29px] h-[694px] pl-[2px] pr-[1px]">
    <div className="h-full flex flex-col items-center rounded-full bg-[#f7f7f7]">
      <div className="h-[26px] flex items-center justify-center"><Tri dir="u" c="#555" size={13} /></div>
      <div className="w-[12px] h-[613px] rounded-full bg-[#6e6e6e]" />
      <div className="mt-[37px]"><Tri dir="d" c="#555" size={13} /></div>
    </div>
  </div>
);

const SHEETS = [7, 6, 5, 4, 3, 2, 1];

const SheetTabs = () => (
  <div className="h-[30px] flex items-stretch border-t border-[#9a9a9a] border-b border-b-[#cfd1d6] text-[16.5px] text-[#333]">
    <div className="w-[102px] flex items-center pl-[24px]">
      <Tri dir="l" c="#107c41" />
      <div className="ml-[19px]"><Tri dir="r" c="#b5b5b5" /></div>
      <span className="ml-[17px] text-[#107c41] font-bold text-[16px] leading-none mb-[6px]">...</span>
    </div>
    {SHEETS.map((n) => (
      <div key={n} className={n === 6 ? 'w-[129px] flex items-center justify-center bg-white border-x border-[#9a9a9a] border-b-2 border-b-[#107c41] text-[#17633a] font-bold whitespace-nowrap text-[16px]' : 'w-[129px] py-[3px] flex whitespace-nowrap'}>
        {n === 6 ? (
          <span dir="rtl">معاملات شهر 6</span>
        ) : (
          <span dir="rtl" className="w-full flex items-center justify-center gap-[5px] border-r border-[#8a8a8a]">معاملات شهر {n}</span>
        )}
      </div>
    ))}
    <div className="w-[156px] flex items-center">
      <svg className="ml-[32px]" width="24" height="24" viewBox="0 0 24 24" fill="none" stroke="#7a7a7a" strokeWidth="1.400">
        <circle cx="12" cy="12" r="10.500" />
        <path d="M12 7v10M7 12h10" />
      </svg>
      <div className="ml-[84px] flex flex-col gap-[3px]">
        <div className="w-[3px] h-[3px] bg-[#555]" />
        <div className="w-[3px] h-[3px] bg-[#555]" />
        <div className="w-[3px] h-[3px] bg-[#555]" />
      </div>
    </div>
    <div className="w-[729px] my-[1px] flex items-center rounded-full bg-[#f7f7f7] pl-[8px]">
      <Tri dir="l" c="#555" size={12} />
      <div className="ml-[6px] w-[653px] h-[12px] rounded-full bg-[#444]" />
      <div className="ml-[31px]"><Tri dir="r" c="#555" size={12} /></div>
    </div>
  </div>
);

const StatusBar = () => (
  <div className="h-[32px] flex items-center bg-[#f3f3f3] text-[#444] text-[14px]">
    <span className="ml-[12px] w-[35px] text-[15px]">76%</span>
    <span className="ml-[13px] w-[14px] text-center text-[18px]">+</span>
    <div className="ml-[8px] w-[148px] h-[16px] flex items-center">
      <div className="w-[92px] h-[2px] bg-[#666]" />
      <div className="w-[8px] h-[16px] bg-[#666]" />
      <div className="flex-1 h-[2px] bg-[#666]" />
    </div>
    <span className="ml-[7px] w-[12px] h-[2px] bg-[#555]" />
    <svg className="ml-[28px]" width="22" height="22" viewBox="0 0 22 22" fill="none" stroke="#444" strokeWidth="1.500">
      <rect x="1" y="1" width="20" height="20" />
      <path d="M9 1v11H1M15 1v11h6" />
    </svg>
    <svg className="ml-[38px]" width="22" height="22" viewBox="0 0 22 22" fill="none" stroke="#444" strokeWidth="1.500">
      <rect x="1" y="1" width="20" height="20" />
      <rect x="5.500" y="4" width="11" height="14" strokeWidth="1" />
      <path d="M8 8h6M8 11h6M8 14h6" strokeWidth="1" />
    </svg>
    <div className="ml-[19px] w-[60px] h-full flex items-center justify-center bg-[#e0e0e0]">
      <svg width="20" height="20" viewBox="0 0 20 20" fill="none" stroke="#444" strokeWidth="1.400">
        <rect x="1" y="1" width="18" height="18" />
        <path d="M7 1v18M13 1v18M1 7h18M1 13h18" />
      </svg>
    </div>
    <div className="flex-1 flex items-center justify-end pr-[16px]">
      <span dir="rtl" className="whitespace-nowrap text-[16.3px]">إمكانية الوصول لذوي الاحتياجات الخاصة: اطلع على توصيات</span>
      <svg className="ml-[4px]" width="22" height="24" viewBox="0 0 22 24" fill="none" stroke="#444" strokeWidth="1.300">
        <circle cx="10" cy="4" r="2.500" />
        <path d="M1 7c3 2 5 3 9 3s6-1 9-3M6 10l1 5-3 7M12 10l-1 5" />
        <path d="M14 16l7 7M21 16l-7 7" />
      </svg>
      <span className="ml-[26px] w-[34px] text-center text-[15px] whitespace-nowrap">جاهز</span>
    </div>
  </div>
);

export default function App() {
  return (
    <div className="relative w-[1918px] h-[1079px] overflow-hidden bg-[#e6e8ed] [font-family:Lato,'DejaVu_Sans',sans-serif]">
      <TitleBar />
      <TabRow />
      <Ribbon />
      <FormulaBar />
      <div className="mt-[11px] flex">
        <Sheet />
        <VScroll />
      </div>
      <SheetTabs />
      <StatusBar />
      <div className="absolute left-[845px] top-[944px] w-[230px] text-center pointer-events-none text-[#8c8c8c]/20 font-bold">
        <div dir="rtl" className="text-[64px] leading-[78px] scale-y-125">مستقل</div>
        <div className="text-[36px] leading-[36px] [font-family:'Open_Sans',sans-serif]">mostaqi.com</div>
      </div>
    </div>
  );
}
